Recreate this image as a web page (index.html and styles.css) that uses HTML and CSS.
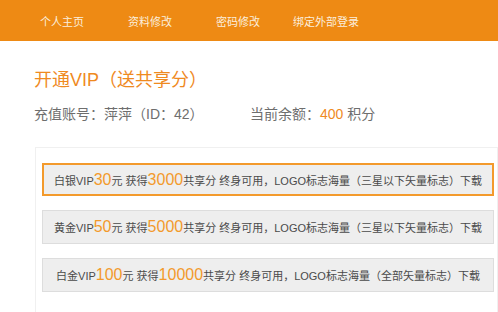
FILE: index.html
```html
<!DOCTYPE html>
<html lang="zh-CN">
<head>
<meta charset="utf-8">
<link rel="stylesheet" href="styles.css">
</head>
<body>
<nav class="nav">
  <a class="nav-item">个人主页</a>
  <a class="nav-item">资料修改</a>
  <a class="nav-item">密码修改</a>
  <a class="nav-item">绑定外部登录</a>
</nav>
<main class="main">
  <h1 class="title">开通VIP（送共享分）</h1>
  <div class="info">
    <span class="account">充值账号：萍萍（ID：42）</span>
    <span class="balance">当前余额：<em class="hl">400</em> 积分</span>
  </div>
  <section class="panel">
    <div class="plan active">白银VIP<em class="num">30</em>元 获得<em class="num">3000</em>共享分 终身可用，LOGO标志海量（三星以下矢量标志）下载</div>
    <div class="plan">黄金VIP<em class="num">50</em>元 获得<em class="num">5000</em>共享分 终身可用，LOGO标志海量（三星以下矢量标志）下载</div>
    <div class="plan">白金VIP<em class="num">100</em>元 获得<em class="num">10000</em>共享分 终身可用，LOGO标志海量（全部矢量标志）下载</div>
  </section>
</main>
</body>
</html>
```

FILE: styles.css
```css
html, body {
  margin: 0;
  padding: 0;
  background: #fff;
  font-family: "Liberation Sans", "Noto Sans CJK SC", sans-serif;
  overflow: hidden;
}
.nav {
  display: flex;
  height: 41px;
  align-items: center;
  background: #ee8a14;
  padding-left: 18px;
}
.nav-item {
  width: 88px;
  text-align: center;
  color: #fbeedd;
  font-size: 11px;
}
.main {
  padding-left: 34px;
}
.title {
  margin: 0;
  padding-top: 27px;
  font-size: 18px;
  font-weight: normal;
  line-height: 24px;
  color: #ef8a1f;
}
.info {
  display: flex;
  margin-top: 12px;
  font-size: 14px;
  line-height: 20px;
  color: #6e6e6e;
}
.account {
  width: 216px;
}
.hl {
  font-style: normal;
  color: #ef8a1f;
}
.panel {
  margin-top: 23px;
  width: 452px;
  margin-left: 1px;
  border: 1px solid #f0f0f0;
  border-bottom: none;
  padding: 15px 3px 20px 6px;
  display: flex;
  flex-direction: column;
  gap: 14px;
}
.plan {
  box-sizing: border-box;
  height: 34px;
  display: flex;
  align-items: center;
  justify-content: center;
  background: #eeeeee;
  border: 1px solid #dddddd;
  font-size: 11px;
  color: #4a4a4a;
  white-space: nowrap;
}
.plan.active {
  border: 2px solid #f39a2c;
  height: 33px;
}
.num {
  font-style: normal;
  font-size: 16px;
  color: #f39a2c;
}
```
